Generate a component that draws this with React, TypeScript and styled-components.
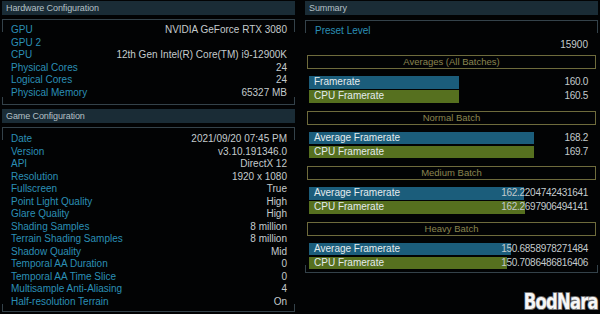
import React from "react";
import styled, { createGlobalStyle } from "styled-components";

const Global = createGlobalStyle`
  html, body { margin: 0; padding: 0; background: #020304; }
  body { width: 600px; height: 314px; overflow: hidden; font-family: "Liberation Sans", Arial, sans-serif; }
`;

const Page = styled.div`
  position: relative;
  width: 600px;
  height: 314px;
  box-sizing: border-box;
  padding: 1px 2px 0 2px;
  display: grid;
  grid-template-columns: 293px 293px;
  column-gap: 10px;
  align-items: start;
`;

const Column = styled.div`
  display: flex;
  flex-direction: column;
  gap: 4px;
`;

const Header = styled.div`
  height: 14px;
  background: #1a2c36;
  color: #b4c0c6;
  font-size: 9px;
  line-height: 14px;
  padding-left: 4px;
  letter-spacing: -0.1px;
`;

const Box = styled.div<{ $pt: number; $pb: number }>`
  box-sizing: border-box;
  border-top: 1px solid #34424a;
  border-bottom: 1px solid #34424a;
  padding: ${(p) => p.$pt}px 8px ${(p) => p.$pb}px 9px;
  background:
    linear-gradient(#34424a, #34424a) left top / 1px 12px no-repeat,
    linear-gradient(#34424a, #34424a) right top / 1px 12px no-repeat,
    linear-gradient(#34424a, #34424a) left bottom / 1px 7px no-repeat,
    linear-gradient(#34424a, #34424a) right bottom / 1px 7px no-repeat;
`;

const Row = styled.div<{ $h: number }>`
  display: flex;
  justify-content: space-between;
  height: ${(p) => p.$h}px;
  line-height: ${(p) => p.$h}px;
  font-size: 10px;
`;

const Label = styled.span`
  color: #2b8fb6;
`;

const Value = styled.span`
  color: #c4cbcd;
`;

const SummaryBox = styled.div`
  box-sizing: border-box;
  height: 253px;
  margin-top: 1px;
  border-top: 1px solid #34424a;
  border-bottom: 1px solid #34424a;
  padding: 2px 2px 0 2px;
  display: flex;
  flex-direction: column;
  background:
    linear-gradient(#34424a, #34424a) left top / 1px 12px no-repeat,
    linear-gradient(#34424a, #34424a) right top / 1px 12px no-repeat,
    linear-gradient(#34424a, #34424a) left bottom / 1px 7px no-repeat,
    linear-gradient(#34424a, #34424a) right bottom / 1px 7px no-repeat;
`;

const Preset = styled.div`
  box-sizing: border-box;
  flex-shrink: 0;
  display: flex;
  flex-direction: column;
  font-size: 10px;
  padding: 1px 8px 0 8px;
  height: 32px;
`;

const PresetLabel = styled.div`
  color: #2b8fb6;
  height: 13px;
  line-height: 13px;
`;

const PresetValue = styled.div`
  color: #c4cbcd;
  text-align: right;
  height: 15px;
  line-height: 15px;
`;

const Section = styled.div`
  flex-shrink: 0;
  display: flex;
  flex-direction: column;
  margin-bottom: 8px;
  &:last-child {
    margin-bottom: 0;
  }
`;

const SectionHead = styled.div`
  box-sizing: border-box;
  height: 14px;
  border: 1px solid #6e6b3c;
  color: #8a8550;
  font-size: 9.5px;
  line-height: 12px;
  text-align: center;
  margin-bottom: 7px;
`;

const Bars = styled.div`
  display: flex;
  flex-direction: column;
  gap: 1.5px;
  padding: 0 8px 0 2px;
`;

const BarRow = styled.div`
  display: grid;
  height: 12.5px;
  font-size: 10px;
  line-height: 12.5px;
`;

const Bar = styled.div<{ $color: string }>`
  grid-area: 1 / 1;
  justify-self: start;
  height: 12.5px;
  background: ${(p) => p.$color};
  color: #e4ecee;
  padding-left: 5px;
  box-sizing: border-box;
  white-space: nowrap;
`;

const BarValue = styled.span`
  grid-area: 1 / 1;
  justify-self: end;
  color: #c4cbcd;
  letter-spacing: -0.3px;
`;

const Watermark = styled.div`
  position: absolute;
  right: 2px;
  bottom: 1px;
  font-family: "DejaVu Sans", sans-serif;
  font-weight: bold;
  font-size: 21px;
  line-height: 22px;
  letter-spacing: -1px;
  color: #f6f6f6;
  -webkit-text-stroke: 2px #707070;
  paint-order: stroke fill;
  transform: scaleX(0.78);
  transform-origin: right bottom;
`;

const hardware: [string, string][] = [
  ["GPU", "NVIDIA GeForce RTX 3080"],
  ["GPU 2", ""],
  ["CPU", "12th Gen Intel(R) Core(TM) i9-12900K"],
  ["Physical Cores", "24"],
  ["Logical Cores", "24"],
  ["Physical Memory", "65327 MB"],
];

const game: [string, string][] = [
  ["Date", "2021/09/20 07:45 PM"],
  ["Version", "v3.10.191346.0"],
  ["API", "DirectX 12"],
  ["Resolution", "1920 x 1080"],
  ["Fullscreen", "True"],
  ["Point Light Quality", "High"],
  ["Glare Quality", "High"],
  ["Shading Samples", "8 million"],
  ["Terrain Shading Samples", "8 million"],
  ["Shadow Quality", "Mid"],
  ["Temporal AA Duration", "0"],
  ["Temporal AA Time Slice", "0"],
  ["Multisample Anti-Aliasing", "4"],
  ["Half-resolution Terrain", "On"],
];

const BLUE = "#1b5d7b";
const GREEN = "#56701f";

type Batch = {
  title: string;
  rows: { label: string; value: string; width: number; color: string }[];
};

const batches: Batch[] = [
  {
    title: "Averages (All Batches)",
    rows: [
      { label: "Framerate", value: "160.0", width: 150, color: BLUE },
      { label: "CPU Framerate", value: "160.5", width: 150, color: GREEN },
    ],
  },
  {
    title: "Normal Batch",
    rows: [
      { label: "Average Framerate", value: "168.2", width: 225, color: BLUE },
      { label: "CPU Framerate", value: "169.7", width: 225, color: GREEN },
    ],
  },
  {
    title: "Medium Batch",
    rows: [
      { label: "Average Framerate", value: "162.2204742431641", width: 215, color: BLUE },
      { label: "CPU Framerate", value: "162.2697906494141", width: 216, color: GREEN },
    ],
  },
  {
    title: "Heavy Batch",
    rows: [
      { label: "Average Framerate", value: "150.6858978271484", width: 202, color: BLUE },
      { label: "CPU Framerate", value: "150.7086486816406", width: 198, color: GREEN },
    ],
  },
];

export default function App() {
  return (
    <>
      <Global />
      <Page>
        <Column>
          <Header>Hardware Configuration</Header>
          <Box $pt={4} $pb={4}>
            {hardware.map(([k, v]) => (
              <Row key={k} $h={12.6}>
                <Label>{k}</Label>
                <Value>{v}</Value>
              </Row>
            ))}
          </Box>
          <Header>Game Configuration</Header>
          <Box $pt={5.5} $pb={2.5}>
            {game.map(([k, v]) => (
              <Row key={k} $h={12.5}>
                <Label>{k}</Label>
                <Value>{v}</Value>
              </Row>
            ))}
          </Box>
        </Column>
        <Column>
          <Header>Summary</Header>
          <SummaryBox>
            <Preset>
              <PresetLabel>Preset Level</PresetLabel>
              <PresetValue>15900</PresetValue>
            </Preset>
            {batches.map((b) => (
              <Section key={b.title}>
                <SectionHead>{b.title}</SectionHead>
                <Bars>
                  {b.rows.map((r) => (
                    <BarRow key={r.label}>
                      <Bar $color={r.color} style={{ width: r.width }}>
                        {r.label}
                      </Bar>
                      <BarValue>{r.value}</BarValue>
                    </BarRow>
                  ))}
                </Bars>
              </Section>
            ))}
          </SummaryBox>
        </Column>
        <Watermark>BodNara</Watermark>
      </Page>
    </>
  );
}
